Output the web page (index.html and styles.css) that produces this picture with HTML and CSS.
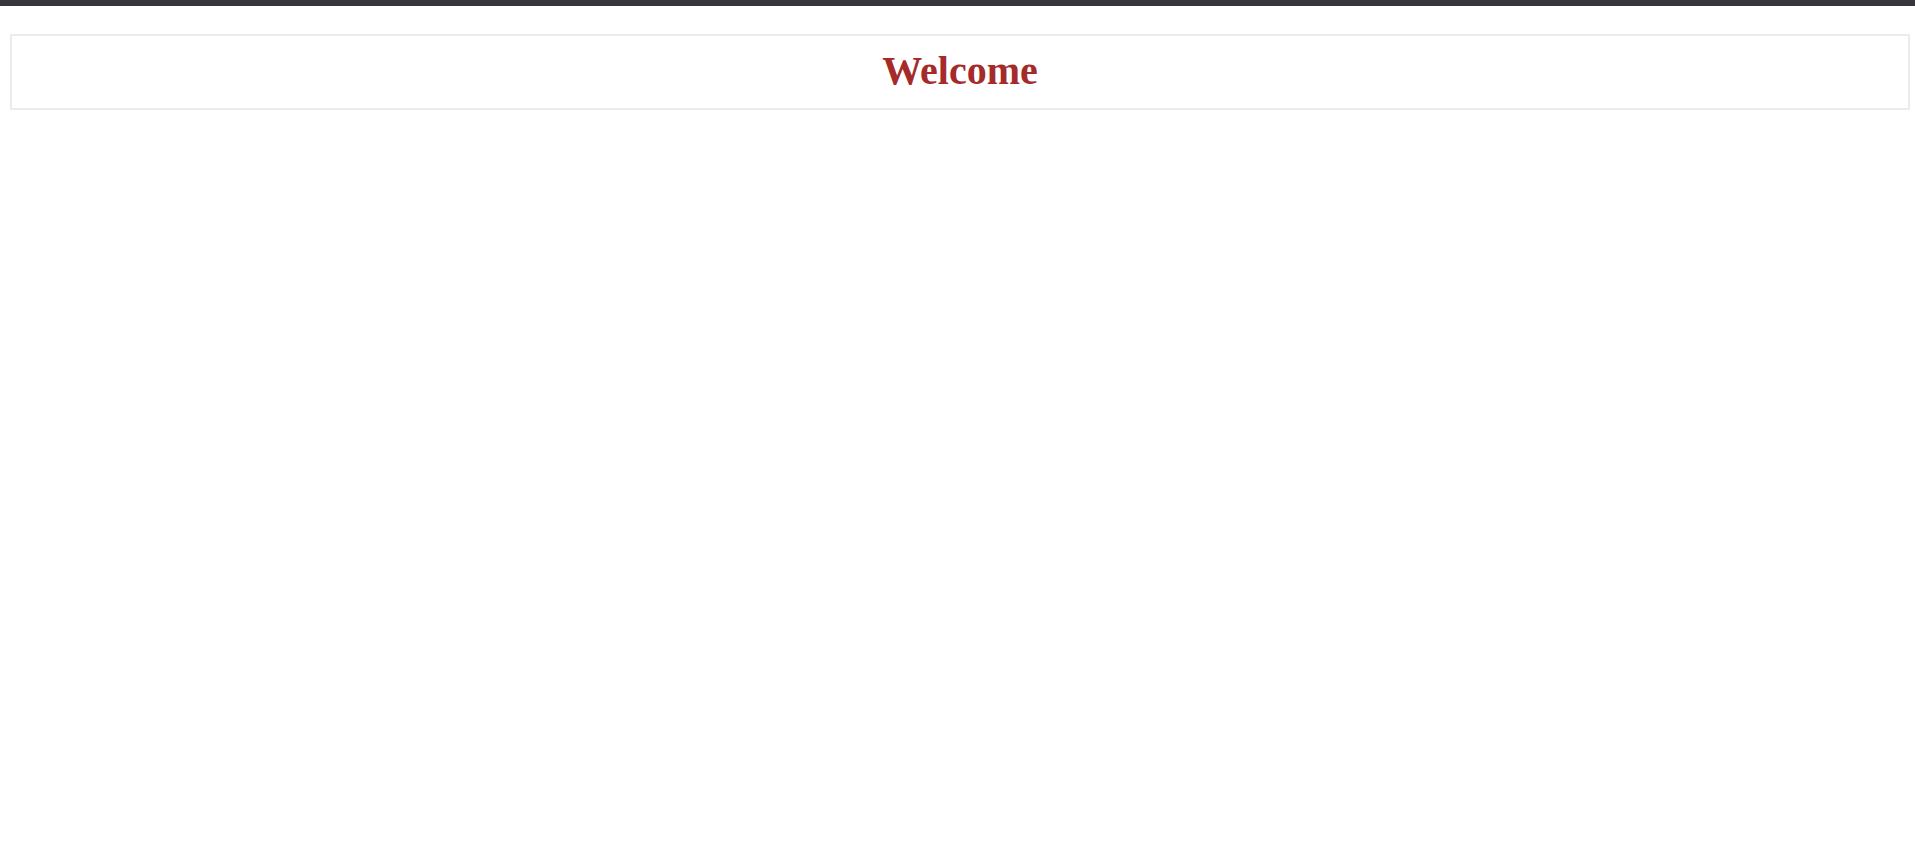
FILE: index.html
```html
<!DOCTYPE html>
<html lang="en">
<head>
<meta charset="utf-8">
<title>Welcome</title>
<link rel="stylesheet" href="styles.css">
</head>
<body>
<div class="topbar"></div>
<main class="panel">
  <h1 class="title">Welcome</h1>
</main>
</body>
</html>
```
FILE: styles.css
```css
html, body {
  margin: 0;
  padding: 0;
  background: #ffffff;
}
body {
  font-family: "Liberation Serif", "Times New Roman", serif;
}
.topbar {
  height: 6px;
  background: #36363b;
}
.panel {
  margin: 28px 5px 0 10px;
  border: 2px solid #ececec;
  box-sizing: border-box;
}
.title {
  margin: 0;
  padding: 12px 0 14px;
  font-size: 40px;
  line-height: 46px;
  font-weight: bold;
  color: #a52a2a;
  text-align: center;
}
```
